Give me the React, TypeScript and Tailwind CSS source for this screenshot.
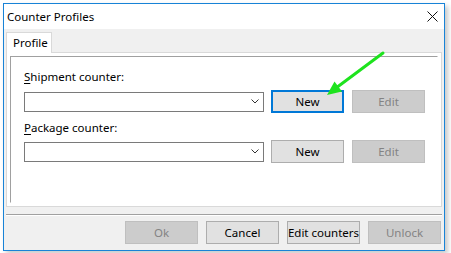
import React from 'react';

const font = "font-['Segoe_UI','Noto_Sans',Arial,sans-serif]";

function Btn({ label, disabled, focused }: { label: string; disabled?: boolean; focused?: boolean }) {
  const base = 'w-[73px] h-[23px] flex items-center justify-center text-[11.5px] leading-none whitespace-nowrap shrink-0';
  if (disabled) {
    return <div className={`${base} bg-[#cccccc] border border-[#bfbfbf] text-[#838383]`}>{label}</div>;
  }
  if (focused) {
    return <div className={`${base} bg-[#e1e1e1] border-2 border-[#0078d7] text-black`}>{label}</div>;
  }
  return <div className={`${base} bg-[#e1e1e1] border border-[#adadad] text-black`}>{label}</div>;
}

function Combo() {
  return (
    <div className="w-[240px] h-[20px] border border-[#7a7a7a] bg-white flex items-center justify-end pr-[4px] shrink-0">
      <svg width="8" height="5" viewBox="0 0 8 5">
        <path d="M0.5 0.5 L4 4 L7.5 0.5" fill="none" stroke="#333" strokeWidth="1" />
      </svg>
    </div>
  );
}

function CounterRow({ focused }: { focused?: boolean }) {
  return (
    <div className="flex items-center h-[23px]">
      <Combo />
      <div className="ml-[7px]">
        <Btn label="New" focused={focused} />
      </div>
      <div className="ml-[8px]">
        <Btn label="Edit" disabled />
      </div>
    </div>
  );
}

export default function App() {
  return (
    <div className={`w-[451px] h-[253px] bg-white overflow-hidden relative ${font} text-black`}>
      {/* dialog window */}
      <div className="absolute left-[3px] top-[3px] w-[442px] h-[248px] border border-[#1883d7] bg-white flex flex-col shadow-[3px_3px_5px_rgba(0,0,0,0.22)]">
        {/* title bar */}
        <div className="h-[25px] shrink-0 flex items-center justify-between pl-[3px] pr-[6px] bg-white">
          <span className="text-[11.5px] leading-none whitespace-nowrap">Counter Profiles</span>
          <svg width="11" height="11" viewBox="0 0 11 11">
            <path d="M0.5 0.5 L10.5 10.5 M10.5 0.5 L0.5 10.5" stroke="#111" strokeWidth="1" />
          </svg>
        </div>

        {/* body */}
        <div className="flex-1 bg-[#f0f0f0] pt-[3px] px-[2px] flex flex-col">
          {/* tabs */}
          <div className="flex relative z-10 -mb-px">
            <div className="w-[46px] h-[21px] bg-white border border-b-0 border-[#d9d9d9] flex items-center pl-[6px] text-[11.5px] leading-none">
              Profile
            </div>
          </div>

          {/* tab page */}
          <div className="h-[155px] bg-white border border-[#d9d9d9] p-[3px]">
            <div className="h-full border-t border-l border-[#a0a0a0] border-r border-b border-r-white border-b-white pl-[13px] flex flex-col">
              <div className="mt-[12px] h-[16px] flex items-center text-[11.5px] leading-none">
                <span><u className="underline-offset-2">S</u>hipment counter:</span>
              </div>
              <div className="mt-[5px]">
                <CounterRow focused />
              </div>
              <div className="mt-[7px] h-[16px] flex items-center text-[11.5px] leading-none">
                <span><u className="underline-offset-2">P</u>ackage counter:</span>
              </div>
              <div className="mt-[4px]">
                <CounterRow />
              </div>
            </div>
          </div>

          {/* separator */}
          <div className="mt-[7px] border-t border-[#a0a0a0] border-b border-b-white" />

          {/* dialog buttons */}
          <div className="mt-[5px] flex justify-end gap-[8px] pr-[1px]">
            <Btn label="Ok" disabled />
            <Btn label="Cancel" />
            <Btn label="Edit counters" />
            <Btn label="Unlock" disabled />
          </div>
        </div>
      </div>

      {/* annotation arrow */}
      <svg className="absolute left-0 top-0 pointer-events-none" width="451" height="253" viewBox="0 0 451 253">
        <line x1="383" y1="53" x2="336" y2="88" stroke="#1ee31e" strokeWidth="3" strokeLinecap="round" />
        <polygon points="327,95 342,91.5 334.5,81.5" fill="#1ee31e" />
      </svg>
    </div>
  );
}
